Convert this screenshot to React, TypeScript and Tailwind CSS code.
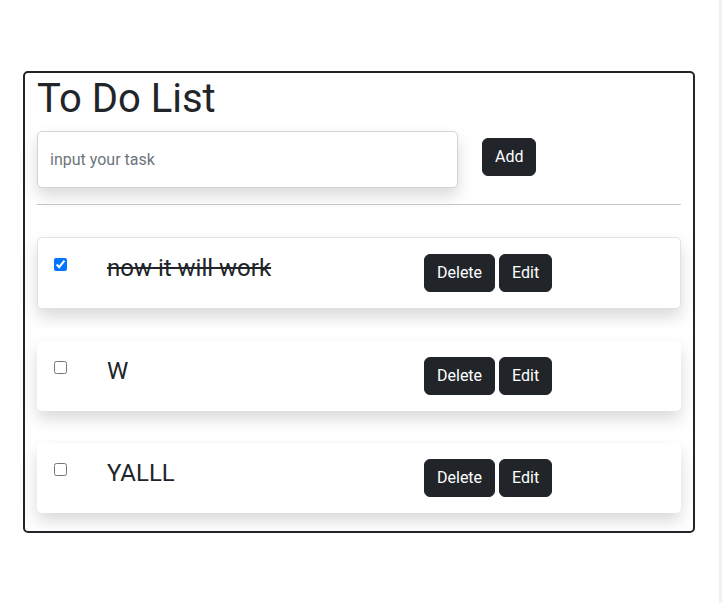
import { useState } from "react"

type Task = { id: number; text: string; done: boolean }

const startTasks: Task[] = [
  { id: 1, text: "now it will work", done: true },
  { id: 2, text: "W", done: false },
  { id: 3, text: "YALLL", done: false },
]

function TaskCard({ task, first, onToggle }: { task: Task; first: boolean; onToggle: () => void }) {
  return (
    <div
      className={
        first
          ? "flex items-start bg-white rounded-[5px] border border-[#dee2e6] p-4 shadow-[0_8px_16px_rgba(0,0,0,0.15)]"
          : "flex items-start bg-white rounded-[5px] px-[17px] py-4 shadow-[0_8px_16px_rgba(0,0,0,0.15)]"
      }
    >
      <div className="w-[53px] shrink-0">
        <input type="checkbox" checked={task.done} onChange={onToggle} className="m-0 mt-[3px] w-[13px] h-[13px]" />
      </div>
      <p className={"w-[317px] shrink-0 text-[24px] leading-[1.2] text-[#212529] " + (task.done ? "line-through" : "")}>
        {task.text}
      </p>
      <div className="flex gap-1">
        <button className="h-[38px] px-3 rounded-[6px] border border-[#212529] bg-[#212529] text-white text-[16px] leading-[1.5]">Delete</button>
        <button className="h-[38px] px-3 rounded-[6px] border border-[#212529] bg-[#212529] text-white text-[16px] leading-[1.5]">Edit</button>
      </div>
    </div>
  )
}

export default function App() {
  const [tasks, setTasks] = useState(startTasks)

  const toggle = (id: number) =>
    setTasks(tasks.map((t) => (t.id === id ? { ...t, done: !t.done } : t)))

  return (
    <div className="flex min-h-[603px] bg-white font-['Roboto',_'Liberation_Sans',_sans-serif]">
      <div className="flex-1 pt-[71px] pl-[23px]">
        <div className="w-[672px] border-2 border-[#212529] rounded-[5px] px-3 pb-[18px]">
          <h1 className="mt-[2px] mb-2 text-[40px] leading-[1.2] font-normal text-[#212529]">To Do List</h1>
          <div className="flex items-start gap-6">
            <input
              type="text"
              placeholder="input your task"
              className="w-[421px] h-[57px] px-3 rounded-[5px] border border-[#ced4da] bg-white text-[16px] text-[#212529] outline-none shadow-[0_8px_16px_rgba(0,0,0,0.15)] placeholder:text-[#6c757d]"
            />
            <button className="mt-[7px] h-[38px] px-3 rounded-[6px] border border-[#212529] bg-[#212529] text-white text-[16px] leading-[1.5]">Add</button>
          </div>
          <hr className="my-4 border-t border-[#c8c9ca]" />
          <div className="mt-8 flex flex-col gap-8">
            {tasks.map((t, i) => (
              <TaskCard key={t.id} task={t} first={i === 0} onToggle={() => toggle(t.id)} />
            ))}
          </div>
        </div>
      </div>
      <div className="w-[3px] bg-[#f1f1f1]" />
    </div>
  )
}
